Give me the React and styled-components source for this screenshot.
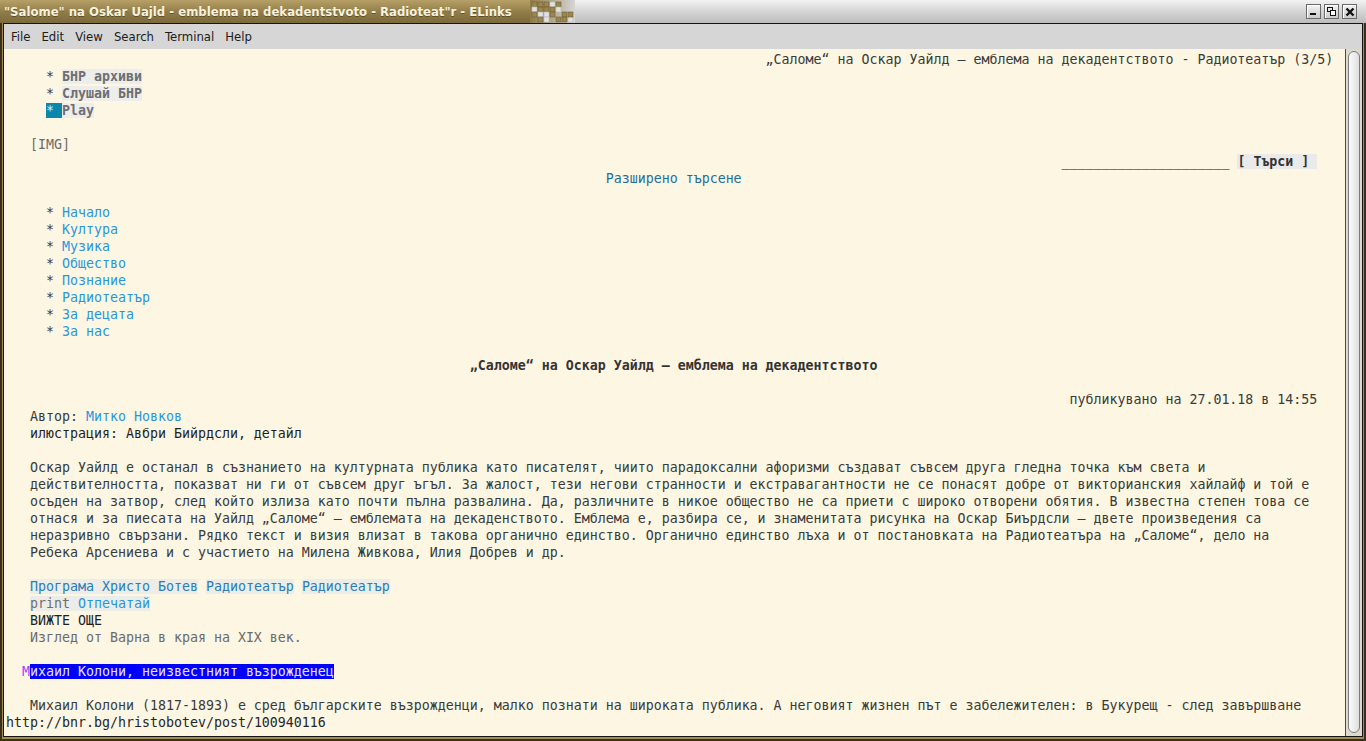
import React from 'react';
import styled, { createGlobalStyle } from 'styled-components';

/**
 * Styles
 */

const GlobalStyle = createGlobalStyle`
  html, body {
    margin: 0;
    padding: 0;
    background: #2b2417;
  }
  body {
    width: 1366px;
    height: 741px;
    overflow: hidden;
  }
`;

const Window = styled.div`
  width: 1366px;
  height: 741px;
  display: flex;
  flex-direction: column;
  overflow: hidden;
`;

const TitleBar = styled.div`
  height: 23px;
  flex-shrink: 0;
  display: flex;
`;

const TitleGold = styled.div`
  width: 530px;
  box-sizing: border-box;
  padding-left: 4px;
  display: flex;
  align-items: center;
  white-space: nowrap;
  background: linear-gradient(#b6a067, #8f7b47 55%, #7c6a3b);
  color: #f8f2dd;
  font-family: "DejaVu Sans Condensed", "DejaVu Sans", sans-serif;
  font-stretch: condensed;
  font-size: 13px;
  font-weight: 600;
  text-shadow: 0 1px 0 rgba(0, 0, 0, .35);
`;

const Checker = styled.svg`
  display: block;
  flex-shrink: 0;
`;

const TitleGray = styled.div`
  flex: 1;
  display: flex;
  justify-content: flex-end;
  align-items: center;
  gap: 3px;
  padding-right: 9px;
  background: linear-gradient(#f3f3f3, #d2d2d2 55%, #bcbcbc);
`;

const WinButton = styled.div`
  width: 15px;
  height: 15px;
  box-sizing: border-box;
  border: 1px solid #6a6a6a;
  background: linear-gradient(#f4f4f4, #c9c9c9);
  box-shadow: inset 1px 1px 0 #fff;
  display: flex;
  align-items: center;
  justify-content: center;
`;

const Frame = styled.div`
  flex: 1;
  min-height: 0;
  display: flex;
  flex-direction: column;
  background: #a48d55;
  border: 2px solid #3a2f1a;
  border-top: 0;
  padding: 0 1px 2px 1px;
`;

const Inner = styled.div`
  flex: 1;
  min-height: 0;
  display: flex;
  flex-direction: column;
  border: 1px solid #141414;
  background: #fdf6e3;
`;

const MenuBar = styled.div`
  height: 25px;
  flex-shrink: 0;
  display: flex;
  align-items: center;
  padding-left: 7px;
  gap: 11px;
  background: #d6d6d6;
  color: #1c1c1c;
  font-family: "DejaVu Sans Condensed", "DejaVu Sans", sans-serif;
  font-stretch: condensed;
  font-size: 13px;
`;

const MenuItem = styled.span`
  display: inline-block;
`;

const Body = styled.div`
  flex: 1;
  min-height: 0;
  display: flex;
`;

const Screen = styled.div`
  flex: 1;
  padding: 2px 0 0 2px;
  font-family: "DejaVu Sans Mono", monospace;
  font-size: 13.29px;
  color: #383b3b;
  overflow: hidden;
`;

const Row = styled.div`
  height: 17px;
  line-height: 17px;
  white-space: pre;
  padding-left: ${p => p.$col || 0}ch;
`;

const Star = styled.span`
  color: ${p => (p.$active ? '#d7eef6' : '#3b3b3b')};
  background: ${p => (p.$active ? '#0b87ae' : 'transparent')};
`;

const TopLink = styled.span`
  font-weight: bold;
  color: #6f6f6f;
  background: #ededeb;
`;

const NavLink = styled.span`
  color: #2896dc;
`;

const Muted = styled.span`
  color: #6b6b6b;
`;

const Dark = styled.span`
  color: #1f1f1f;
`;

const Heading = styled.span`
  font-weight: bold;
  color: #343434;
`;

const SearchButton = styled.span`
  font-weight: bold;
  color: #333;
  background: #eaeaea;
`;

const Tag = styled.span`
  color: ${p => p.$tone || '#2a7db6'};
  background: ${p => (p.$plain ? 'transparent' : '#ecece9')};
`;

const Cursor = styled.span`
  color: #a040ff;
`;

const Selected = styled.span`
  color: #e8e2ff;
  background: #0000ff;
`;

const Status = styled.span`
  color: #262626;
`;

const ScrollTrack = styled.div`
  width: 17px;
  flex-shrink: 0;
  border-left: 1px solid #4a4a4a;
  background: #ddd9cd;
  padding: 2px 2px 3px 2px;
  box-sizing: border-box;
  display: flex;
`;

const Thumb = styled.div`
  flex: 1;
  border: 1px solid #7c7c7c;
  border-radius: 6px;
  background: linear-gradient(to right, #fbfbfb, #dedede);
`;

/**
 * Data
 */

const topLinks = ['БНР архиви', 'Слушай БНР'];

const nav = [
  'Начало',
  'Култура',
  'Музика',
  'Общество',
  'Познание',
  'Радиотеатър',
  'За децата',
  'За нас',
];

const paragraph = [
  'Оскар Уайлд е останал в съзнанието на културната публика като писателят, чиито парадоксални афоризми създават съвсем друга гледна точка към света и',
  'действителността, показват ни ги от съвсем друг ъгъл. За жалост, тези негови странности и екстравагантности не се понасят добре от викторианския хайлайф и той е',
  'осъден на затвор, след който излиза като почти пълна развалина. Да, различните в никое общество не са приети с широко отворени обятия. В известна степен това се',
  'отнася и за пиесата на Уайлд „Саломе“ – емблемата на декаденството. Емблема е, разбира се, и знаменитата рисунка на Оскар Биърдсли – двете произведения са',
  'неразривно свързани. Рядко текст и визия влизат в такова органично единство. Органично единство лъха и от постановката на Радиотеатъра на „Саломе“, дело на',
  'Ребека Арсениева и с участието на Милена Живкова, Илия Добрев и др.',
];

const checker = [
  [0, 0, 1], [1, 0, 1], [0, 1, 0], [2, 0, 1], [1, 1, 1], [3, 0, 0], [2, 1, 1],
  [0, 2, 1], [1, 2, 0], [3, 1, 1], [4, 0, 1], [2, 2, 0], [4, 1, 0], [3, 2, 1],
  [5, 2, 1], [6, 3, 0], [4, 3, 1], [5, 3, 1], [1, 3, 1], [2, 3, 0], [6, 2, 1],
];

/**
 * Component
 */

const TitleChecker = () => (
  <Checker width="45" height="23" viewBox="0 0 45 23">
    <defs>
      <linearGradient id="fade" x1="0" x2="1" y1="0" y2="0">
        <stop offset="0" stopColor="#8f7b47" />
        <stop offset="1" stopColor="#d6d6d6" />
      </linearGradient>
    </defs>
    <rect width="45" height="23" fill="url(#fade)" />
    {checker.map(([cx, cy, gold], i) => (
      <rect
        key={i}
        x={cx * 6 + 2}
        y={cy * 5 + 2}
        width="5"
        height="5"
        fill={gold ? '#9c8650' : '#e2e2e2'}
        stroke={gold ? '#6f5e30' : '#b8b8b8'}
        strokeWidth="0.6"
      />
    ))}
  </Checker>
);

const App = () => (
  <>
    <GlobalStyle />
    <Window>
      <TitleBar>
        <TitleGold>"Salome" na Oskar Uajld - emblema na dekadentstvoto - Radioteat"r - ELinks</TitleGold>
        <TitleChecker />
        <TitleGray>
          <WinButton>
            <svg width="9" height="9" viewBox="0 0 9 9">
              <rect x="1" y="6" width="6" height="2" fill="#111" />
            </svg>
          </WinButton>
          <WinButton>
            <svg width="9" height="9" viewBox="0 0 9 9">
              <rect x="0.5" y="0.5" width="5" height="4" fill="none" stroke="#111" />
              <rect x="3.5" y="3.5" width="5" height="5" fill="#fff" stroke="#111" />
            </svg>
          </WinButton>
          <WinButton>
            <svg width="10" height="10" viewBox="0 0 10 10">
              <path d="M1.5 1.5 L8.5 8.5 M8.5 1.5 L1.5 8.5" stroke="#111" strokeWidth="2.4" />
            </svg>
          </WinButton>
        </TitleGray>
      </TitleBar>

      <Frame>
        <Inner>
          <MenuBar>
            {['File', 'Edit', 'View', 'Search', 'Terminal', 'Help'].map(m => (
              <MenuItem key={m}>{m}</MenuItem>
            ))}
          </MenuBar>

          <Body>
            <Screen>
              <Row $col={95}>„Саломе“ на Оскар Уайлд – емблема на декадентството - Радиотеатър (3/5)</Row>
              {topLinks.map(t => (
                <Row key={t} $col={5}>
                  <Star>* </Star>
                  <TopLink>{t}</TopLink>
                </Row>
              ))}
              <Row $col={5}>
                <Star $active>* </Star>
                <TopLink>Play</TopLink>
              </Row>
              <Row />
              <Row $col={3}><Muted>[IMG]</Muted></Row>
              <Row $col={132}>
                <Dark>_____________________ </Dark>
                <SearchButton>[ Търси ] </SearchButton>
              </Row>
              <Row $col={75}><Tag $plain $tone="#1f6f9c">Разширено търсене</Tag></Row>
              <Row />
              {nav.map(n => (
                <Row key={n} $col={5}>
                  <Star>* </Star>
                  <NavLink>{n}</NavLink>
                </Row>
              ))}
              <Row />
              <Row $col={58}><Heading>„Саломе“ на Оскар Уайлд – емблема на декадентството</Heading></Row>
              <Row />
              <Row $col={133}>публикувано на 27.01.18 в 14:55</Row>
              <Row $col={3}>Автор: <NavLink>Митко Новков</NavLink></Row>
              <Row $col={3}><Dark>илюстрация: Авбри Бийрдсли, детайл</Dark></Row>
              <Row />
              {paragraph.map((line, i) => (
                <Row key={i} $col={3}>{line}</Row>
              ))}
              <Row />
              <Row $col={3}>
                <Tag>Програма Христо Ботев</Tag> <Tag>Радиотеатър</Tag> <Tag>Радиотеатър</Tag>
              </Row>
              <Row $col={3}>
                <Tag $tone="#6f6f6f">print </Tag>
                <Tag $tone="#2896dc">Отпечатай</Tag>
              </Row>
              <Row $col={3}><Dark>ВИЖТЕ ОЩЕ</Dark></Row>
              <Row $col={3}><Muted>Изглед от Варна в края на XIX век.</Muted></Row>
              <Row />
              <Row $col={2}>
                <Cursor>М</Cursor>
                <Selected>ихаил Колони, неизвестният възрожденец</Selected>
              </Row>
              <Row />
              <Row $col={3}>Михаил Колони (1817-1893) е сред българските възрожденци, малко познати на широката публика. А неговият жизнен път е забележителен: в Букурещ - след завършване</Row>
              <Row><Status>http://bnr.bg/hristobotev/post/100940116</Status></Row>
            </Screen>
            <ScrollTrack>
              <Thumb />
            </ScrollTrack>
          </Body>
        </Inner>
      </Frame>
    </Window>
  </>
);

export default App;
